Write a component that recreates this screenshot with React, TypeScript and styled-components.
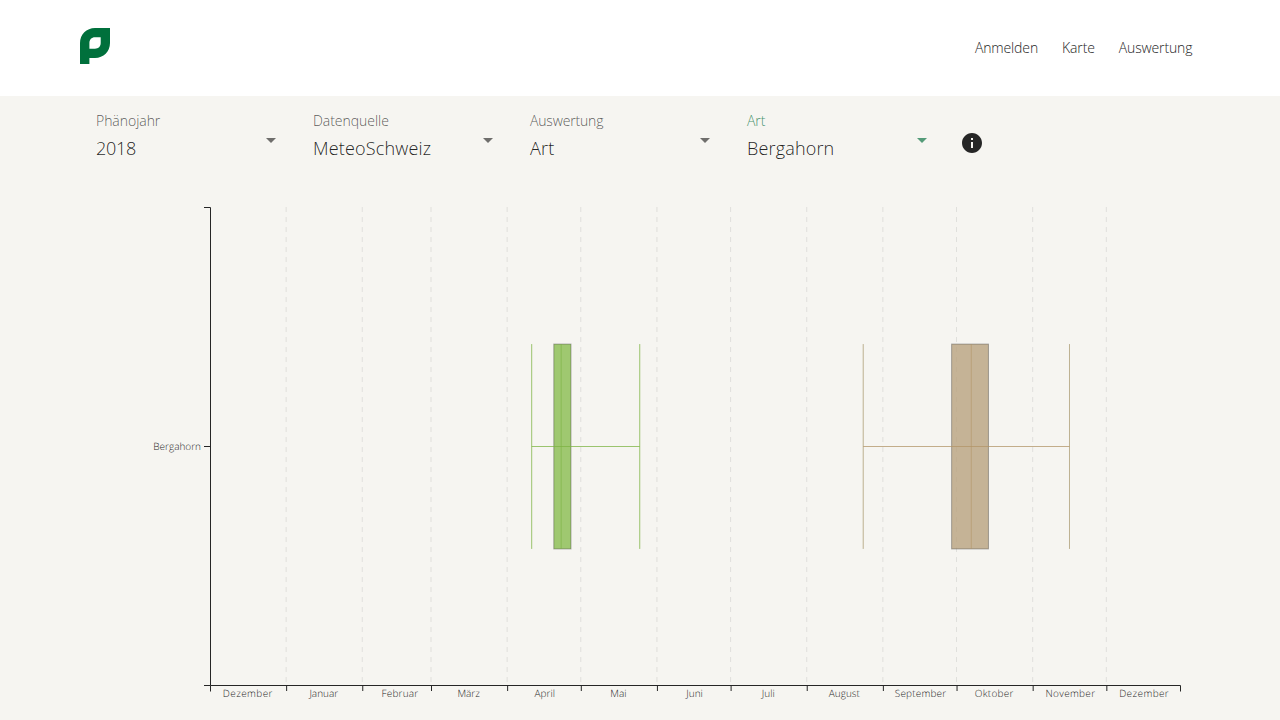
import React from "react";
import styled, { createGlobalStyle } from "styled-components";

const GlobalStyle = createGlobalStyle`
  * { box-sizing: border-box; }
  body {
    margin: 0;
    background: #f6f5f1;
    color: #262626;
    font-family: "Open Sans", sans-serif;
    font-weight: 300;
  }
`;

const Page = styled.div`
  height: 720px;
  overflow: hidden;
  display: flex;
  flex-direction: column;
`;

const Header = styled.header`
  height: 96px;
  flex: none;
  padding: 0 87.6px 0 80px;
  display: flex;
  align-items: center;
  justify-content: space-between;
  background: #fff;
`;

const Logo = styled.svg`
  display: block;
  margin-top: -4px;
`;

const Nav = styled.nav`
  display: flex;
  gap: 24px;
`;

const NavLink = styled.a`
  font-size: 14px;
  line-height: 20px;
  letter-spacing: -0.13px;
  color: #262626;
  text-decoration: none;
`;

const Filters = styled.div`
  flex: none;
  height: 111px;
  padding: 8px 0 0 80px;
  display: flex;
  align-items: flex-start;
  gap: 16px;
`;

const Select = styled.div`
  width: 201px;
  height: 56px;
  padding: 6px 5px 0 16px;
  display: flex;
  justify-content: space-between;
`;

const SelectText = styled.div`
  display: flex;
  flex-direction: column;
`;

const Label = styled.span<{ $active?: boolean; $tracking?: number }>`
  flex: none;
  height: 24px;
  font-size: 14px;
  line-height: 21px;
  letter-spacing: ${(p) => p.$tracking ?? -0.04}px;
  white-space: nowrap;
  color: ${(p) => (p.$active ? "rgba(0, 112, 60, 0.75)" : "rgba(0, 0, 0, 0.65)")};
`;

const Value = styled.span<{ $tracking?: number }>`
  flex: none;
  font-size: 18px;
  line-height: 28px;
  letter-spacing: ${(p) => p.$tracking ?? 0.17}px;
  color: rgba(0, 0, 0, 0.87);
`;

const Arrow = styled.svg<{ $active?: boolean }>`
  margin-top: 28px;
  fill: ${(p) => (p.$active ? "#549b79" : "#6f6e6c")};
`;

const Info = styled.svg`
  margin: 27px 0 0 12px;
  fill: #262626;
`;

const Chart = styled.svg`
  display: block;
  flex: none;
  text {
    font-size: 10px;
    fill: #262626;
    text-rendering: geometricPrecision;
  }
`;

const LEFT = 210;
const WIDTH = 970;
const DAYS = 395;
const TOP = 0.5;
const HEIGHT = 478;
const BAND = (HEIGHT * 3) / 7;
const BAND_TOP = TOP + (HEIGHT - BAND) / 2;
const MIDDLE = TOP + HEIGHT / 2;
const x = (day: number) => LEFT + (day / DAYS) * WIDTH;

// Month name, first day on the axis, and the label's width where it is fixed
const months: [string, number, number?][] = [
  ["Dezember", 0, 49.6],
  ["Januar", 31],
  ["Februar", 62, 36.6],
  ["März", 90],
  ["April", 121],
  ["Mai", 151],
  ["Juni", 182],
  ["Juli", 212],
  ["August", 243],
  ["September", 274, 51.4],
  ["Oktober", 304, 38.6],
  ["November", 335, 49.6],
  ["Dezember", 365, 49.6],
];

const series = [
  { color: "#8abd50", line: "#7cb342", whisker: "#7cb342", min: 131, q1: 140, median: 143, q3: 147, max: 175 },
  { color: "#b9a27f", line: "#b29467", whisker: "#aa9a70", min: 266, q1: 302, median: 310, q3: 317, max: 350 },
];

const filters = [
  { label: "Phänojahr", value: "2018", tracking: -0.25 },
  { label: "Datenquelle", value: "MeteoSchweiz" },
  { label: "Auswertung", value: "Art", labelTracking: -0.16 },
  { label: "Art", value: "Bergahorn", active: true },
];

function BoxPlot({ s }: { s: (typeof series)[number] }) {
  return (
    <g>
      <rect
        x={x(s.q1)}
        y={BAND_TOP}
        width={x(s.q3) - x(s.q1)}
        height={BAND}
        fill={s.color}
        fillOpacity={0.8}
        stroke="#262626"
        strokeOpacity={0.35}
      />
      <g stroke={s.line} strokeOpacity={0.75}>
        {[s.min, s.max].map((d) => (
          <line key={d} x1={x(d)} x2={x(d)} y1={BAND_TOP} y2={BAND_TOP + BAND} stroke={s.whisker} />
        ))}
        <line x1={x(s.median)} x2={x(s.median)} y1={BAND_TOP} y2={BAND_TOP + BAND} strokeOpacity={0.6} />
        <line x1={x(s.min)} x2={x(s.max)} y1={MIDDLE} y2={MIDDLE} />
      </g>
    </g>
  );
}

export default function App() {
  return (
    <Page>
      <GlobalStyle />
      <Header>
        <Logo width="30" height="36" viewBox="0 0 30 36">
          <path
            fill="#00703c"
            fillRule="evenodd"
            d="M0 36V15C0 6.5 6.5 0 15 0H30V15C30 23.5 23.5 30 15 30H9.4V36ZM9.4 20.7H15C18.5 20.7 20.7 18.5 20.7 15V9.2H15C11.5 9.2 9.4 11.4 9.4 15Z"
          />
        </Logo>
        <Nav>
          <NavLink>Anmelden</NavLink>
          <NavLink>Karte</NavLink>
          <NavLink>Auswertung</NavLink>
        </Nav>
      </Header>
      <Filters>
        {filters.map((f) => (
          <Select key={f.label}>
            <SelectText>
              <Label $active={f.active} $tracking={f.labelTracking}>
                {f.label}
              </Label>
              <Value $tracking={f.tracking}>{f.value}</Value>
            </SelectText>
            <Arrow $active={f.active} width="10" height="5" viewBox="0 0 10 5">
              <path d="M0 0H10L5 5Z" />
            </Arrow>
          </Select>
        ))}
        <Info width="24" height="24" viewBox="0 0 24 24">
          <path d="M12 2C6.48 2 2 6.48 2 12s4.48 10 10 10 10-4.48 10-10S17.52 2 12 2zm1 15h-2v-6h2v6zm0-8h-2V7h2v2z" />
        </Info>
      </Filters>
      <Chart width="1280" height="513" viewBox="0 0 1280 513">
        {months.slice(1).map(([name, d]) => (
          <line
            key={name + d}
            x1={x(d)}
            x2={x(d)}
            y1={0}
            y2={478}
            stroke="#262626"
            strokeOpacity={0.1}
            strokeDasharray="5,5"
          />
        ))}
        {series.map((s) => (
          <BoxPlot key={s.color} s={s} />
        ))}
        <g fill="none" stroke="#262626">
          <path d={`M204 0.5H210.5V478.5H204M204 ${MIDDLE}H210`} />
          <path d="M210.5 484.5V478.5H1180.5V484.5" />
          {months.slice(1).map(([name, d]) => (
            <line key={name + d} x1={x(d) + 0.5} x2={x(d) + 0.5} y1={478} y2={484} />
          ))}
        </g>
        <text x="201" y="243" textAnchor="end">
          Bergahorn
        </text>
        {months.map(([name, d, width]) => (
          <text key={name + d} x={x(d + 15) + 0.8} y="490" textAnchor="middle" textLength={width}>
            {name}
          </text>
        ))}
      </Chart>
    </Page>
  );
}
